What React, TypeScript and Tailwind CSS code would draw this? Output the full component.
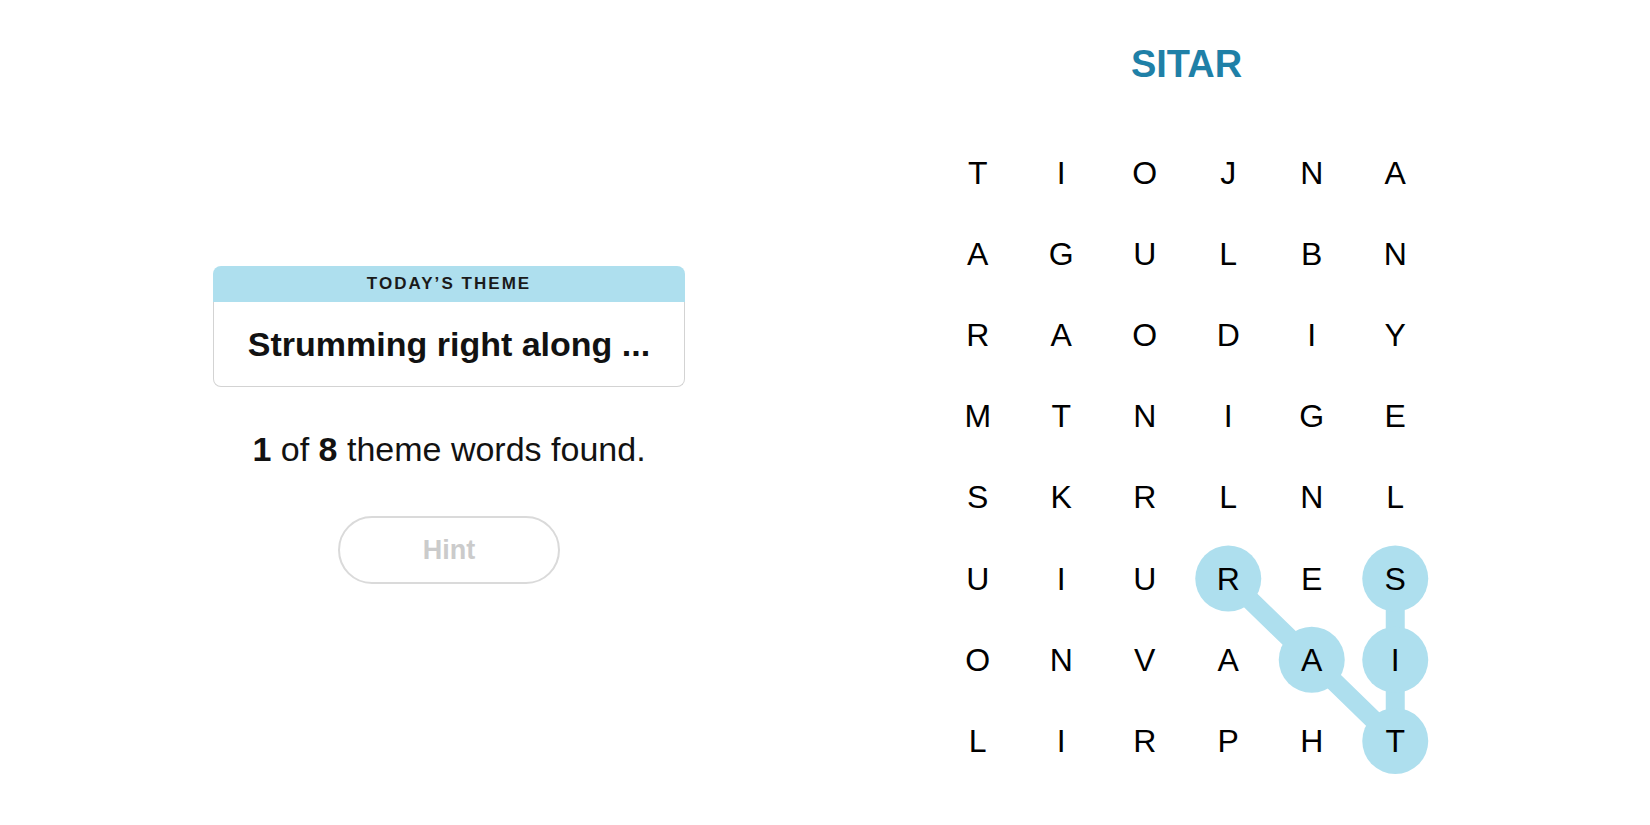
import React from "react";

const GRID = [
  "TIOJNA",
  "AGULBN",
  "RAODIY",
  "MTNIGE",
  "SKRLNL",
  "UIURES",
  "ONVAAI",
  "LIRPHT",
];

const CELL_W = 83.5;
const CELL_H = 81.2;

// found word path: SITAR (S-I-T-A-R)
const FOUND: [number, number][] = [
  [5, 5],
  [6, 5],
  [7, 5],
  [6, 4],
  [5, 3],
];

const center = ([r, c]: [number, number]) => ({
  x: CELL_W / 2 + CELL_W * c,
  y: CELL_H / 2 + CELL_H * r,
});

function Board() {
  const pts = FOUND.map(center);
  return (
    <div className="relative mt-[49px]">
      <svg
        className="absolute inset-0 pointer-events-none"
        width={CELL_W * 6}
        height={CELL_H * 8}
      >
        <polyline
          points={pts.map((p) => `${p.x},${p.y}`).join(" ")}
          fill="none"
          stroke="#aedfee"
          strokeWidth="19"
          strokeLinejoin="round"
        />
        {pts.map((p, i) => (
          <circle key={i} cx={p.x} cy={p.y} r="33" fill="#aedfee" />
        ))}
      </svg>
      <div className="relative grid grid-cols-[repeat(6,83.5px)] grid-rows-[repeat(8,81.2px)]">
        {GRID.flatMap((row, r) =>
          row.split("").map((ch, c) => (
            <div
              key={`${r}-${c}`}
              className="flex items-center justify-center text-[32px] leading-none text-black"
            >
              {ch}
            </div>
          ))
        )}
      </div>
    </div>
  );
}

export default function App() {
  return (
    <div
      className="w-full h-[825px] bg-white flex justify-center items-start gap-[251px] overflow-hidden"
      style={{ fontFamily: '"Liberation Sans", Arial, sans-serif' }}
    >
      {/* Left: theme + progress */}
      <div className="w-[472px] mt-[266px] flex flex-col items-center">
        <div className="w-full">
          <div className="h-[36px] bg-[#aedfee] rounded-t-[8px] flex items-center justify-center text-[17px] font-semibold tracking-[0.12em] text-[#1a1a1a]">
            TODAY’S THEME
          </div>
          <div className="h-[85px] border-x border-b border-[#d3d3d3] rounded-b-[8px] flex items-center justify-center text-[34px] font-bold text-[#121212]">
            Strumming right along ...
          </div>
        </div>

        <p className="mt-[42px] text-[34px] leading-[40px] text-[#121212]">
          <b>1</b> of <b>8</b> theme words found.
        </p>

        <button
          disabled
          className="mt-[47px] w-[222px] h-[68px] rounded-full border-2 border-[#dadada] text-[27px] font-bold text-[#cbcbcb] bg-white"
        >
          Hint
        </button>
      </div>

      {/* Right: found word + board */}
      <div className="w-[501px] mt-[45px] flex flex-col items-center">
        <h2 className="text-[38px] leading-none font-bold text-[#1f80a7]">SITAR</h2>
        <Board />
      </div>
    </div>
  );
}
